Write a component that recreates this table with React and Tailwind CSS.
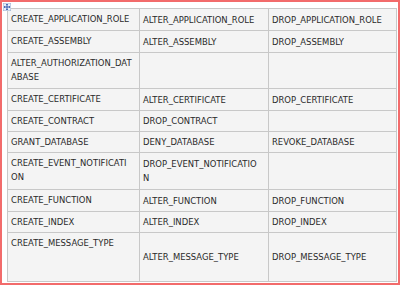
import React from "react";

const rows = [
  { h: "h-[22px]", cells: ["CREATE_APPLICATION_ROLE", "ALTER_APPLICATION_ROLE", "DROP_APPLICATION_ROLE"] },
  { h: "h-[22px]", cells: ["CREATE_ASSEMBLY", "ALTER_ASSEMBLY", "DROP_ASSEMBLY"] },
  { h: "h-[36px]", cells: [["ALTER_AUTHORIZATION_DAT", "ABASE"], "", ""] },
  { h: "h-[22px]", cells: ["CREATE_CERTIFICATE", "ALTER_CERTIFICATE", "DROP_CERTIFICATE"] },
  { h: "h-[21px]", cells: ["CREATE_CONTRACT", "DROP_CONTRACT", ""] },
  { h: "h-[21px]", cells: ["GRANT_DATABASE", "DENY_DATABASE", "REVOKE_DATABASE"] },
  { h: "h-[37px]", cells: [["CREATE_EVENT_NOTIFICATI", "ON"], ["DROP_EVENT_NOTIFICATIO", "N"], ""] },
  { h: "h-[22px]", cells: ["CREATE_FUNCTION", "ALTER_FUNCTION", "DROP_FUNCTION"] },
  { h: "h-[21px]", cells: ["CREATE_INDEX", "ALTER_INDEX", "DROP_INDEX"] },
  { h: "h-[49px]", cells: ["CREATE_MESSAGE_TYPE", "ALTER_MESSAGE_TYPE", "DROP_MESSAGE_TYPE"] },
];

const widths = ["w-[132px]", "w-[129px]", "w-[128px]"];

function MoveHandle() {
  return (
    <svg width="8" height="8" viewBox="0 0 8 8" className="absolute left-[1px] top-[1px]">
      <rect x="0" y="0" width="8" height="8" fill="#e8eef8" stroke="#9aaed0" strokeWidth="1" />
      <path d="M4 1 L4 7 M1 4 L7 4" stroke="#3a5fb0" strokeWidth="1" />
      <path d="M4 1 L3 2 M4 1 L5 2 M4 7 L3 6 M4 7 L5 6 M1 4 L2 3 M1 4 L2 5 M7 4 L6 3 M7 4 L6 5" stroke="#3a5fb0" strokeWidth="0.8" />
    </svg>
  );
}

function CellText({ value }) {
  if (Array.isArray(value)) {
    return (
      <>
        {value[0]}
        <br />
        {value[1]}
      </>
    );
  }
  return value;
}

export default function App() {
  return (
    <div
      className="relative w-[400px] h-[285px] bg-white border-2 border-[#f26b6b] pl-[5px] pt-[6px]"
      style={{ fontFamily: '"DejaVu Sans", Verdana, sans-serif' }}
    >
      <MoveHandle />
      <table className="table-fixed border-collapse border border-[#b8b8b8] w-[389px] text-[8.45px] leading-[14px] text-[#2a2a2a]">
        <tbody>
          {rows.map((row, i) => (
            <tr key={i} className={row.h}>
              {row.cells.map((c, j) => (
                <td
                  key={j}
                  className={`${widths[j]} border border-[#c8c8c8] bg-[#f4f4f4] px-[3px] py-0 whitespace-nowrap overflow-hidden ${
                    j === 0 ? "align-top pt-[3px]" : "align-middle"
                  }`}
                >
                  <CellText value={c} />
                </td>
              ))}
            </tr>
          ))}
        </tbody>
      </table>
    </div>
  );
}
